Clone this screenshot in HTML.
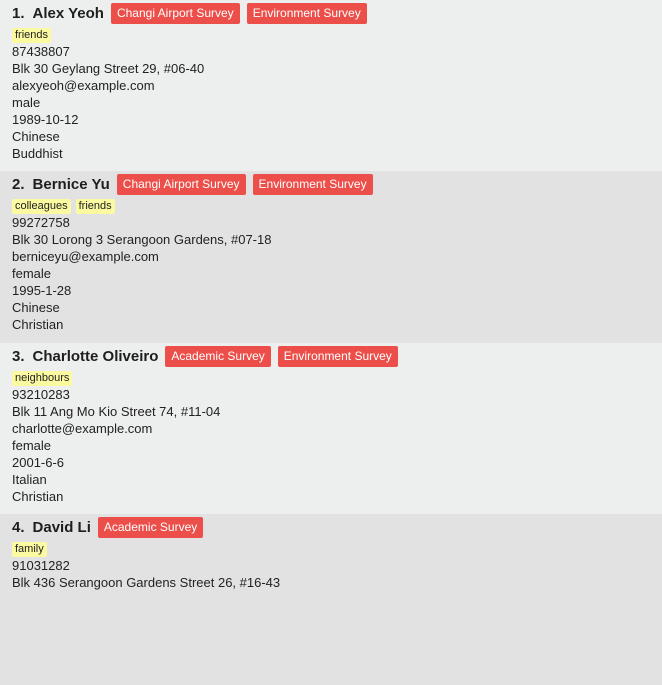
<!DOCTYPE html>
<html style="background:#e2e2e2"><head><style>
body{margin:0;width:662px;height:598px;overflow:hidden;font-family:"Segoe UI","Liberation Sans",sans-serif;color:#222;background:#e2e2e2}
.card{padding:3px 0 6px 12px;height:162px;box-sizing:content-box;}
.odd{background:#edeeee}.even{background:#e2e2e2}
.name{height:21px;display:flex;align-items:center;font-size:15px;font-weight:bold;color:#1e1e1e;white-space:nowrap}
.name .n{margin-right:8px}
.s{background:#ec4f4a;color:#fff;font-size:12px;font-weight:normal;height:21px;line-height:21px;padding:0 6px;border-radius:2px;margin-left:7px}
.tags{margin-top:4px;height:15px;display:flex}
.t{background:#fbfaa1;font-size:11px;line-height:15px;padding:0 3px;border-radius:2px;margin-right:5px;color:#222}
.l{font-size:13px;line-height:17px;height:17px;white-space:nowrap}
</style></head><body>
<div class="card odd"><div class="name"><span class="n">1.</span><span class="nm">Alex Yeoh</span><span class="s">Changi Airport Survey</span><span class="s">Environment Survey</span></div>
<div class="tags"><span class="t">friends</span></div>
<div class="l">87438807</div><div class="l">Blk 30 Geylang Street 29, #06-40</div><div class="l">alexyeoh@example.com</div><div class="l">male</div><div class="l">1989-10-12</div><div class="l">Chinese</div><div class="l">Buddhist</div></div>
<div class="card even" style="height:163px"><div class="name"><span class="n">2.</span><span class="nm">Bernice Yu</span><span class="s">Changi Airport Survey</span><span class="s">Environment Survey</span></div>
<div class="tags"><span class="t">colleagues</span><span class="t">friends</span></div>
<div class="l">99272758</div><div class="l">Blk 30 Lorong 3 Serangoon Gardens, #07-18</div><div class="l">berniceyu@example.com</div><div class="l">female</div><div class="l">1995-1-28</div><div class="l">Chinese</div><div class="l">Christian</div></div>
<div class="card odd"><div class="name"><span class="n">3.</span><span class="nm">Charlotte Oliveiro</span><span class="s">Academic Survey</span><span class="s">Environment Survey</span></div>
<div class="tags"><span class="t">neighbours</span></div>
<div class="l">93210283</div><div class="l">Blk 11 Ang Mo Kio Street 74, #11-04</div><div class="l">charlotte@example.com</div><div class="l">female</div><div class="l">2001-6-6</div><div class="l">Italian</div><div class="l">Christian</div></div>
<div class="card even"><div class="name"><span class="n">4.</span><span class="nm">David Li</span><span class="s">Academic Survey</span></div>
<div class="tags"><span class="t">family</span></div>
<div class="l">91031282</div><div class="l">Blk 436 Serangoon Gardens Street 26, #16-43</div></div>
</body></html>
